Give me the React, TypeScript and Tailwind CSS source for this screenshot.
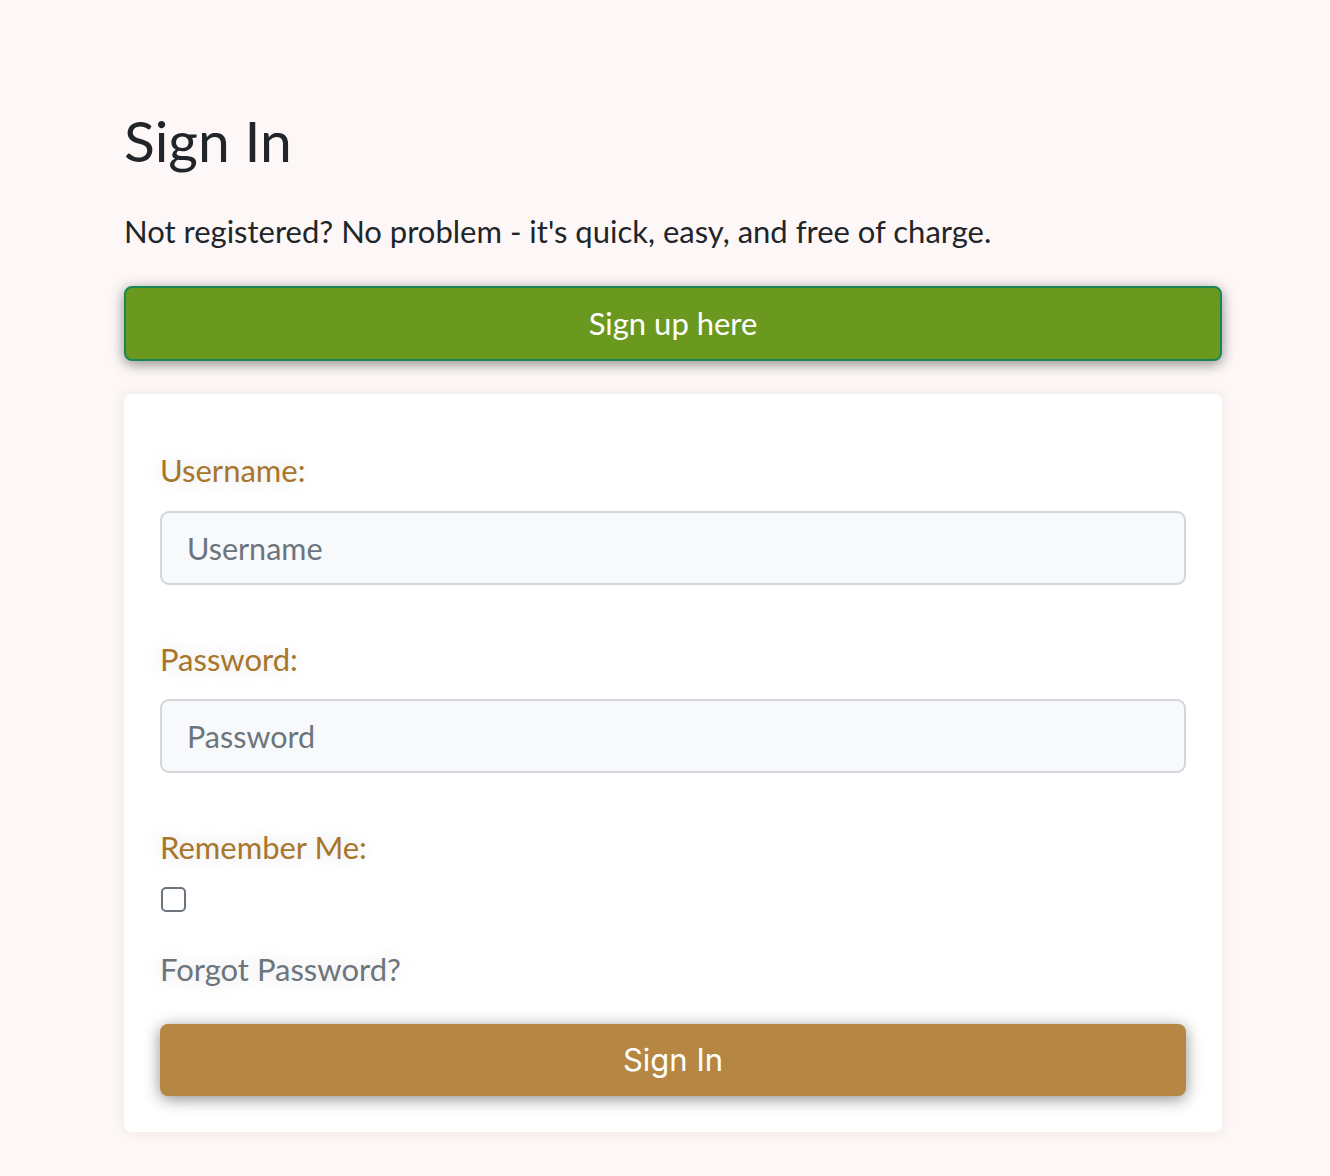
import { useState } from "react";

/**
 * Sign in page
 * - sign up CTA
 * - username / password / remember me
 */
export default function App() {
  const [username, setUsername] = useState("");
  const [password, setPassword] = useState("");
  const [remember, setRemember] = useState(false);

  const labelCls =
    "block text-[31px] leading-[40px] text-[#a8762a] [text-shadow:0_0_20px_rgba(0,0,0,0.16)]";
  const inputCls =
    "block w-full h-[74px] bg-[#f8f9fa] border-2 border-[#d3d6db] rounded-[9px] px-[25px] text-[30.5px] text-[#212529] placeholder:text-[#6c757d] outline-none";

  return (
    <div className="min-h-[1176px] bg-[#fdf8f7] font-['Lato',sans-serif] text-[#212529]">
      <div className="ml-[124px] w-[1098px] pt-[104px]">
        <h1 className="text-[57px] leading-[72px] font-normal">Sign In</h1>
        <p className="mt-[35px] text-[31px] leading-[40px]">
          Not registered? No problem - it's quick, easy, and free of charge.
        </p>

        <button
          type="button"
          className="mt-[35px] block w-full h-[75px] bg-[#6b991f] border-2 border-[#198754] rounded-[8px] text-white text-[31px] shadow-[0_3px_14px_rgba(0,0,0,0.45)]"
        >
          Sign up here
        </button>

        <form
          onSubmit={(e) => e.preventDefault()}
          className="mt-[33px] bg-white rounded-[7px] px-[36px] pt-[56px] pb-[36px] shadow-[0_0_14px_rgba(60,30,20,0.09)]"
        >
          <label htmlFor="username" className={labelCls}>
            Username:
          </label>
          <input
            id="username"
            type="text"
            placeholder="Username"
            value={username}
            onChange={(e) => setUsername(e.target.value)}
            className={`mt-[21px] ${inputCls}`}
          />

          <label htmlFor="password" className={`mt-[54px] ${labelCls}`}>
            Password:
          </label>
          <input
            id="password"
            type="password"
            placeholder="Password"
            value={password}
            onChange={(e) => setPassword(e.target.value)}
            className={`mt-[20px] ${inputCls}`}
          />

          <label htmlFor="remember" className={`mt-[54px] ${labelCls}`}>
            Remember Me:
          </label>
          <input
            id="remember"
            type="checkbox"
            checked={remember}
            onChange={(e) => setRemember(e.target.checked)}
            className="mt-[20px] ml-[1px] block appearance-none w-[25px] h-[25px] border-2 border-[#6c757d] rounded-[5px] bg-white"
          />

          <a
            href="#"
            className="mt-[37px] block w-fit text-[31px] leading-[40px] text-[#6c757d] [text-shadow:0_0_20px_rgba(0,0,0,0.16)]"
          >
            Forgot Password?
          </a>

          <button
            type="submit"
            className="mt-[35px] block w-full h-[72px] bg-[#b58742] rounded-[8px] text-white text-[31px] font-['Inter',sans-serif] shadow-[0_3px_16px_rgba(0,0,0,0.45)]"
          >
            Sign In
          </button>
        </form>
      </div>
    </div>
  );
}
